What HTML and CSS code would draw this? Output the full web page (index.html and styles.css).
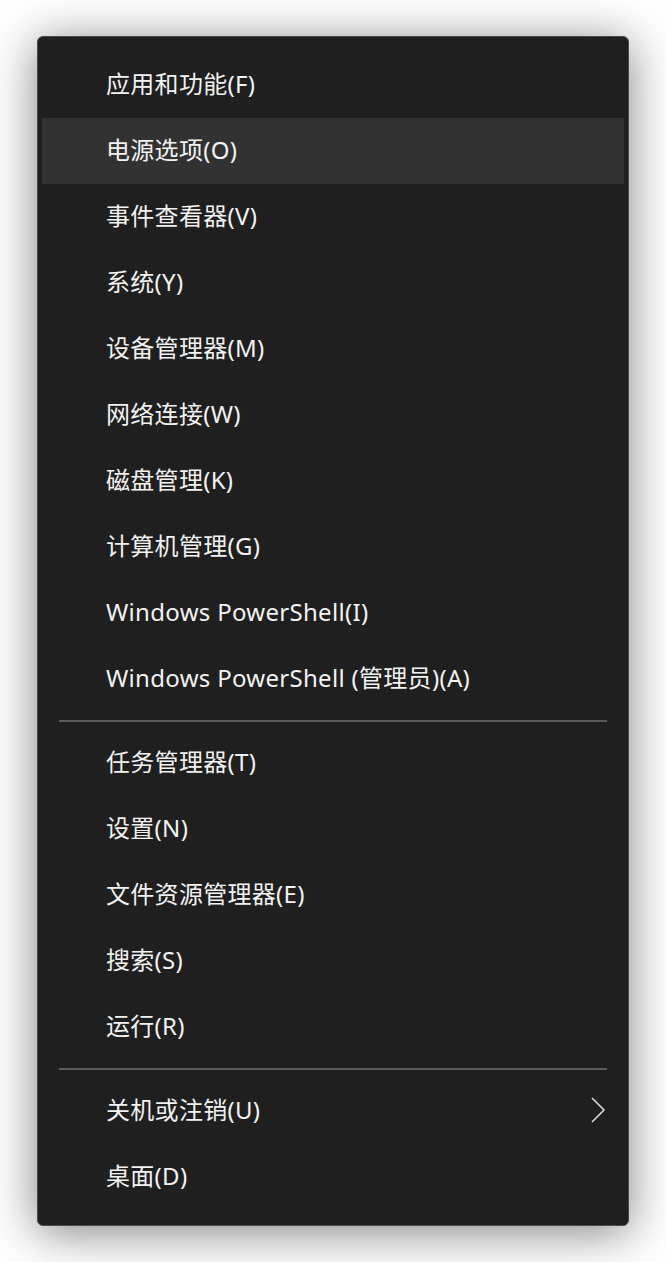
FILE: index.html
```html
<!DOCTYPE html>
<html lang="zh-CN">
<head>
    <meta charset="UTF-8">
    <meta name="viewport" content="width=device-width, initial-scale=1.0">
    <title>Win+X 菜单</title>
    <link rel="stylesheet" href="styles.css">
</head>
<body>
    <div class="menu">
        <div class="menu-item">应用和功能(F)</div>
        <div class="menu-item active">电源选项(O)</div>
        <div class="menu-item">事件查看器(V)</div>
        <div class="menu-item">系统(Y)</div>
        <div class="menu-item">设备管理器(M)</div>
        <div class="menu-item">网络连接(W)</div>
        <div class="menu-item">磁盘管理(K)</div>
        <div class="menu-item">计算机管理(G)</div>
        <div class="menu-item">Windows PowerShell(I)</div>
        <div class="menu-item">Windows PowerShell (管理员)(A)</div>

        <div class="separator"></div>

        <div class="menu-item">任务管理器(T)</div>
        <div class="menu-item">设置(N)</div>
        <div class="menu-item">文件资源管理器(E)</div>
        <div class="menu-item">搜索(S)</div>
        <div class="menu-item">运行(R)</div>

        <div class="separator"></div>

        <div class="menu-item">
            <span>关机或注销(U)</span>
            <svg class="chevron" width="16" height="28" viewBox="0 0 16 28">
                <polyline points="2,2 14,14 2,26" fill="none" stroke="#d8d8d8" stroke-width="1.6"/>
            </svg>
        </div>
        <div class="menu-item">桌面(D)</div>
    </div>
</body>
</html>
```

FILE: styles.css
```css
body {
    margin: 0;
    padding: 36px 0 40px 37px;
    background: #FFFFFF;
    font-family: "Noto Sans", "Noto Sans CJK SC", sans-serif;
}
.menu {
    width: 590px;
    padding: 15px 0;
    background: #1F1F1F;
    border: 1px solid #4A4A4A;
    border-radius: 6px;
    box-shadow: 0 6px 48px rgba(0, 0, 0, 0.5);
}
.menu-item {
    height: 66px;
    margin: 0 4px;
    padding: 0 18px 0 64px;
    display: flex;
    align-items: center;
    justify-content: space-between;
    color: #F2F2F2;
    font-size: 24px;
    letter-spacing: 0.3px;
    line-height: 1;
    padding-bottom: 3px;
    box-sizing: border-box;
}
.menu-item.active {
    background: #323232;
}
.separator {
    height: 2px;
    margin: 8px 21px;
    background: #5C5C5C;
}
.chevron {
    display: block;
}
```
